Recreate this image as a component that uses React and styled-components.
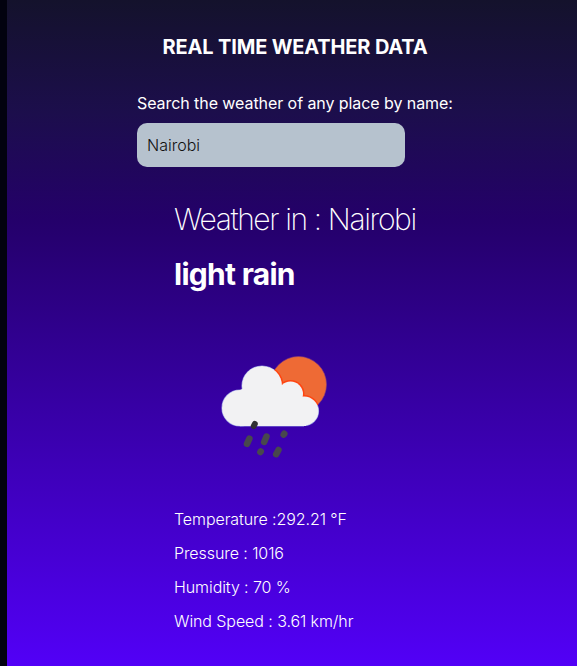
import React from "react";
import styled, { createGlobalStyle } from "styled-components";

const GlobalStyle = createGlobalStyle`
  * { box-sizing: border-box; }
  body { margin: 0; background: #02020f; font-family: Inter, "Liberation Sans", sans-serif; color: #fff; overflow: hidden; }
`;

const Page = styled.main`
  height: 666px;
  margin-left: 7px;
  padding-top: 35px;
  background: linear-gradient(180deg, #14122c 0%, #1c0e4c 17%, #24006a 33%, #5200f7 100%);
`;

const Title = styled.h1`
  margin: 0 0 0 155.5px;
  font-size: 20px;
  line-height: 24px;
  font-weight: 700;
  letter-spacing: -0.15px;
  white-space: nowrap;
`;

const SearchForm = styled.form`
  display: flex;
  flex-direction: column;
  margin: 34px 0 0 130px;
`;

const Label = styled.label`
  font-size: 16px;
  line-height: 20px;
  letter-spacing: -0.07px;
`;

const SearchInput = styled.input`
  width: 268px;
  height: 44px;
  margin-top: 10px;
  padding: 0 10px;
  border: 0;
  border-radius: 10px;
  outline: 0;
  background: #b6c2ce;
  color: #111;
  font: 300 16px Inter, "Liberation Sans", sans-serif;
`;

const Report = styled.section`
  margin: 34px 0 0 167px;
`;

const Place = styled.h2`
  margin: 0;
  font-size: 30px;
  line-height: 36px;
  font-weight: 200;
  letter-spacing: -1.38px;
`;

const Condition = styled.h3`
  margin: 19px 0 0;
  font-size: 30px;
  line-height: 36px;
  font-weight: 700;
  letter-spacing: -0.72px;
`;

const WeatherIcon = styled.svg`
  display: block;
  width: 200px;
  height: 200px;
  margin: 15px 0 0;
`;

const Readings = styled.ul`
  display: grid;
  gap: 14px;
  margin: 2px 0 0;
  padding: 0;
  list-style: none;
`;

const Reading = styled.li`
  font-size: 16px;
  line-height: 20px;
  font-weight: 300;
  letter-spacing: -0.08px;
`;

const readings = [
  "Temperature :292.21 °F",
  "Pressure : 1016",
  "Humidity : 70 %",
  "Wind Speed : 3.61 km/hr",
];

/* Sun partly hidden by a cloud, with rain drops underneath. */
function RainIcon() {
  return (
    <WeatherIcon viewBox="174 307 200 200" role="img" aria-label="light rain">
      <clipPath id="sun">
        <circle cx="298.5" cy="384.5" r="28" />
      </clipPath>
      <g fill="none" stroke="#8c8fe0" strokeWidth="1.2">
        <circle cx="240" cy="408" r="18" />
        <circle cx="262" cy="386" r="20" />
        <circle cx="304" cy="411" r="14.5" />
        <path d="M240 426H304" />
      </g>
      <circle cx="298.5" cy="384.5" r="28" fill="#ee6a35" stroke="#8a4078" strokeWidth="0.6" />
      <g fill="none" stroke="#ff4510" strokeWidth="3" clipPath="url(#sun)">
        <circle cx="262" cy="386" r="20" />
        <circle cx="290.5" cy="394" r="12.5" />
        <circle cx="304" cy="411" r="14.5" />
      </g>
      <g fill="#f2f2f3">
        <circle cx="240" cy="408" r="18" />
        <circle cx="262" cy="386" r="20" />
        <circle cx="290.5" cy="394" r="12.5" />
        <circle cx="304" cy="411" r="14.5" />
        <path d="M240 426V390L262 380L292 388L306 402V426Z" />
      </g>
      <g stroke="#48484d" strokeWidth="6.5" strokeLinecap="round">
        <path d="M249.4 438.6L247 443.8" />
        <path d="M266.5 436.6L264.2 442" />
        <path d="M284.3 433.8L283.7 434.6" />
        <path d="M260.8 451.4L260.4 452" />
        <path d="M278.5 450L276.2 454.2" />
      </g>
      <path d="M254.8 424L253.8 426" stroke="#303033" strokeWidth="6" strokeLinecap="round" />
    </WeatherIcon>
  );
}

export default function App() {
  return (
    <>
      <GlobalStyle />
      <Page>
        <Title>REAL TIME WEATHER DATA</Title>
        <SearchForm>
          <Label htmlFor="place">Search the weather of any place by name:</Label>
          <SearchInput id="place" defaultValue="Nairobi" />
        </SearchForm>
        <Report>
          <Place>Weather in : Nairobi</Place>
          <Condition>light rain</Condition>
          <RainIcon />
          <Readings>
            {readings.map((text) => (
              <Reading key={text}>{text}</Reading>
            ))}
          </Readings>
        </Report>
      </Page>
    </>
  );
}
